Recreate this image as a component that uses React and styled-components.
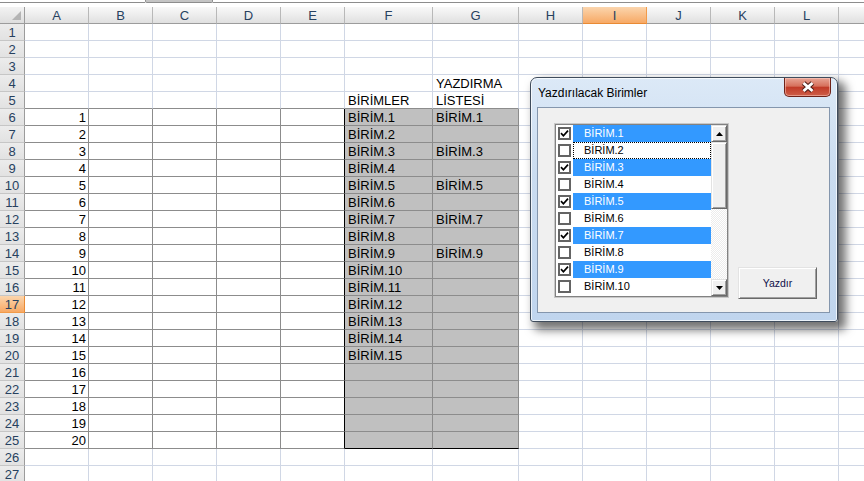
import { styled, createGlobalStyle } from "styled-components";

const COLS = [
  { name: "A", w: 64 },
  { name: "B", w: 64 },
  { name: "C", w: 64 },
  { name: "D", w: 64 },
  { name: "E", w: 64 },
  { name: "F", w: 88 },
  { name: "G", w: 86 },
  { name: "H", w: 64 },
  { name: "I", w: 64 },
  { name: "J", w: 64 },
  { name: "K", w: 64 },
  { name: "L", w: 64 },
  { name: "", w: 64 },
];

const ROWS = Array.from({ length: 27 }, (_, i) => i + 1);
const ACTIVE_COL = 8;
const ACTIVE_ROW = 17;

const GRID = "#d0d7e5";
const LINE = "#8c8c8c";

function cellValue(r, c) {
  if (c === 0 && r >= 6 && r <= 25) return String(r - 5);
  if (c === 5) {
    if (r === 5) return "BİRİMLER";
    if (r >= 6 && r <= 20) return `BİRİM.${r - 5}`;
  }
  if (c === 6) {
    if (r === 4) return "YAZDIRMA";
    if (r === 5) return "LİSTESİ";
    if (r >= 6 && r <= 14 && r % 2 === 0) return `BİRİM.${r - 5}`;
  }
  return "";
}

function cellLook(r, c) {
  const inBody = r >= 6 && r <= 25;
  let right = GRID;
  let bottom = GRID;
  let fill = "#fff";
  if (inBody && c <= 3) right = LINE;
  if (inBody && c === 4) right = "#000";
  if (inBody && (c === 5 || c === 6)) {
    right = LINE;
    fill = "#c0c0c0";
  }
  if (c <= 6 && r >= 5 && r <= 24) bottom = LINE;
  if (r === 25 && c <= 4) bottom = LINE;
  if (r === 25 && (c === 5 || c === 6)) bottom = "#000";
  return { right, bottom, fill };
}

const UNITS = Array.from({ length: 10 }, (_, i) => ({
  label: `BİRİM.${i + 1}`,
  checked: i % 2 === 0,
  focused: i === 1,
}));

export default function App() {
  const template = `25px ${COLS.map((c) => c.w + "px").join(" ")}`;
  return (
    <>
      <GlobalStyle />
      <Sheet>
        <TopStrip>
          <StripLine style={{ width: 145 }} />
          <Splitter />
          <StripLine style={{ flex: 1 }} />
        </TopStrip>
        <Grid style={{ gridTemplateColumns: template }}>
          <Corner>
            <CornerMark />
          </Corner>
          {COLS.map((col, c) => (
            <ColHead key={col.name + c} $active={c === ACTIVE_COL}>
              {col.name}
            </ColHead>
          ))}
          {ROWS.map((r) => [
            <RowHead key={"h" + r} $active={r === ACTIVE_ROW}>
              {r}
            </RowHead>,
            ...COLS.map((col, c) => {
              const look = cellLook(r, c);
              return (
                <Cell
                  key={r + "-" + c}
                  $right={look.right}
                  $bottom={look.bottom}
                  $fill={look.fill}
                  $num={c === 0}
                >
                  {cellValue(r, c)}
                </Cell>
              );
            }),
          ])}
        </Grid>

        <Dialog>
          <TitleBar>
            <Title>Yazdırılacak Birimler</Title>
            <CloseButton>
              <svg width="16" height="12" viewBox="0 0 16 12">
                <path
                  d="M3.5 2 L12.5 10 M12.5 2 L3.5 10"
                  stroke="#4d1c16"
                  strokeWidth="5"
                  fill="none"
                />
                <path
                  d="M3.5 2 L12.5 10 M12.5 2 L3.5 10"
                  stroke="#fff"
                  strokeWidth="3"
                  fill="none"
                />
              </svg>
            </CloseButton>
          </TitleBar>
          <Client>
            <ListBox>
              <Items>
                {UNITS.map((u) => (
                  <Item key={u.label}>
                    <CheckCell>
                      <Box>
                        {u.checked && (
                          <svg width="9" height="9" viewBox="0 0 9 9">
                            <path
                              d="M1 4.2 L3.4 6.8 L8 1.6"
                              stroke="#000"
                              strokeWidth="1.7"
                              fill="none"
                            />
                          </svg>
                        )}
                      </Box>
                    </CheckCell>
                    <Label $checked={u.checked} $focused={u.focused}>
                      {u.label}
                    </Label>
                  </Item>
                ))}
              </Items>
              <ScrollBar>
                <ScrollButton>
                  <svg width="7" height="4" viewBox="0 0 7 4">
                    <polygon points="3.5,0 7,4 0,4" fill="#000" />
                  </svg>
                </ScrollButton>
                <Thumb />
                <Track />
                <ScrollButton>
                  <svg width="7" height="4" viewBox="0 0 7 4">
                    <polygon points="0,0 7,0 3.5,4" fill="#000" />
                  </svg>
                </ScrollButton>
              </ScrollBar>
            </ListBox>
            <PrintButton type="button">Yazdır</PrintButton>
          </Client>
        </Dialog>
      </Sheet>
    </>
  );
}

const GlobalStyle = createGlobalStyle`
  html, body {
    margin: 0;
    padding: 0;
    background: #fff;
    overflow: hidden;
  }
  body {
    font-family: "Liberation Sans", Arial, sans-serif;
  }
`;

const Sheet = styled.div`
  position: relative;
  width: 864px;
  height: 481px;
  overflow: hidden;
  background: #fff;
`;

const TopStrip = styled.div`
  display: flex;
  height: 7px;
  background: #fff;
`;

const StripLine = styled.div`
  height: 2px;
  border-bottom: 1px solid #8d8d8d;
`;

const Splitter = styled.div`
  box-sizing: border-box;
  width: 68px;
  height: 3px;
  background: #c4c4c4;
  border: 1px solid #8d8d8d;
  border-top: none;
  border-radius: 0 0 2px 2px;
`;

const Grid = styled.div`
  display: grid;
  grid-auto-rows: 17px;
  width: 900px;
`;

const headBase = `
  box-sizing: border-box;
  height: 17px;
  display: flex;
  align-items: center;
  justify-content: center;
  font-size: 13px;
  color: #27415f;
`;

const Corner = styled.div`
  ${headBase}
  position: relative;
  background: linear-gradient(#f3f3f3, #dedede);
  border-right: 1px solid #9c9c9c;
  border-bottom: 1px solid #9c9c9c;
`;

const CornerMark = styled.div`
  position: absolute;
  right: 3px;
  bottom: 3px;
  width: 0;
  height: 0;
  border-left: 9px solid transparent;
  border-bottom: 9px solid #b4b4b4;
`;

const ColHead = styled.div`
  ${headBase}
  background: ${(p) =>
    p.$active
      ? "linear-gradient(#fbd5ad, #f7a965)"
      : "linear-gradient(#f9f9f9, #e0e0e0)"};
  border-right: 1px solid ${(p) => (p.$active ? "#f29b4a" : "#b8b8b8")};
  border-bottom: 1px solid ${(p) => (p.$active ? "#e98a34" : "#9c9c9c")};
`;

const RowHead = styled.div`
  ${headBase}
  background: ${(p) =>
    p.$active
      ? "linear-gradient(#fbd5ad, #f7a965)"
      : "linear-gradient(#ececec, #e2e2e2)"};
  border-right: 1px solid ${(p) => (p.$active ? "#e98a34" : "#9c9c9c")};
  border-bottom: 1px solid ${(p) => (p.$active ? "#f29b4a" : "#c6c6c6")};
`;

const Cell = styled.div`
  box-sizing: border-box;
  height: 17px;
  display: flex;
  align-items: flex-end;
  justify-content: ${(p) => (p.$num ? "flex-end" : "flex-start")};
  padding: 0 2px 0 3px;
  background: ${(p) => p.$fill};
  border-right: 1px solid ${(p) => p.$right};
  border-bottom: 1px solid ${(p) => p.$bottom};
  font-size: 13px;
  line-height: 15px;
  color: #000;
  white-space: nowrap;
`;

const Dialog = styled.div`
  position: absolute;
  left: 530px;
  top: 77px;
  box-sizing: border-box;
  width: 308px;
  height: 245px;
  display: flex;
  flex-direction: column;
  padding: 0 7px 8px 6px;
  background: linear-gradient(#dce9f7, #cadcf0 40%, #c0d5ee);
  border: 1px solid #3f4c5c;
  border-radius: 7px 7px 3px 3px;
  box-shadow: 6px 6px 10px 2px rgba(0, 0, 0, 0.55),
    inset 0 0 0 1px rgba(255, 255, 255, 0.7);
  z-index: 2;
`;

const TitleBar = styled.div`
  height: 29px;
  display: flex;
  align-items: flex-start;
`;

const Title = styled.div`
  margin-top: 8px;
  padding-left: 1px;
  font-size: 12px;
  color: #000;
`;

const CloseButton = styled.div`
  box-sizing: border-box;
  margin-left: auto;
  margin-right: -1px;
  width: 47px;
  height: 19px;
  display: flex;
  align-items: center;
  justify-content: center;
  background: linear-gradient(#e8a595, #d6705c 45%, #c13b28 52%, #cd5e48);
  border: 1px solid #6e2219;
  border-top: none;
  border-radius: 0 0 5px 5px;
  box-shadow: inset 0 0 0 1px rgba(255, 210, 200, 0.5);
`;

const Client = styled.div`
  flex: 1;
  display: flex;
  align-items: flex-start;
  gap: 10px;
  padding: 16px 0 0 17px;
  background: #f0f0f0;
  border: 1px solid #8496ad;
`;

const ListBox = styled.div`
  box-sizing: border-box;
  width: 173px;
  height: 173px;
  display: flex;
  background: #fff;
  border: 1px solid #828282;
  box-shadow: 0 0 0 1px #c8c8c8;
`;

const Items = styled.div`
  width: 155px;
`;

const Item = styled.div`
  display: flex;
  height: 17px;
`;

const CheckCell = styled.div`
  width: 17px;
  display: flex;
  align-items: center;
  padding-left: 2px;
  box-sizing: border-box;
`;

const Box = styled.div`
  box-sizing: border-box;
  width: 13px;
  height: 13px;
  display: flex;
  align-items: center;
  justify-content: center;
  background: #fff;
  border: 2px solid #646464;
`;

const Label = styled.div`
  box-sizing: border-box;
  flex: 1;
  height: 17px;
  padding-left: 10px;
  font-size: 11px;
  line-height: 15px;
  color: ${(p) => (p.$checked ? "#fff" : "#000")};
  background: ${(p) => (p.$checked ? "#3399ff" : "#fff")};
  border: 1px ${(p) => (p.$focused ? "dotted #000" : "solid transparent")};
`;

const ScrollBar = styled.div`
  width: 16px;
  display: flex;
  flex-direction: column;
`;

const raised = `
  box-sizing: border-box;
  background: #f0f0f0;
  border: 1px solid;
  border-color: #e3e3e3 #696969 #696969 #e3e3e3;
  box-shadow: inset 1px 1px #fff, inset -1px -1px #a0a0a0;
`;

const ScrollButton = styled.div`
  ${raised}
  height: 17px;
  display: flex;
  align-items: center;
  justify-content: center;
`;

const Thumb = styled.div`
  ${raised}
  height: 67px;
`;

const Track = styled.div`
  flex: 1;
  background-color: #fff;
  background-image: repeating-conic-gradient(#ececec 0 25%, #fff 0 50%);
  background-size: 2px 2px;
`;

const PrintButton = styled.button`
  ${raised}
  margin-top: 143px;
  width: 79px;
  height: 32px;
  padding: 0;
  font-family: "Liberation Sans", Arial, sans-serif;
  font-size: 10.5px;
  color: #10104a;
`;
